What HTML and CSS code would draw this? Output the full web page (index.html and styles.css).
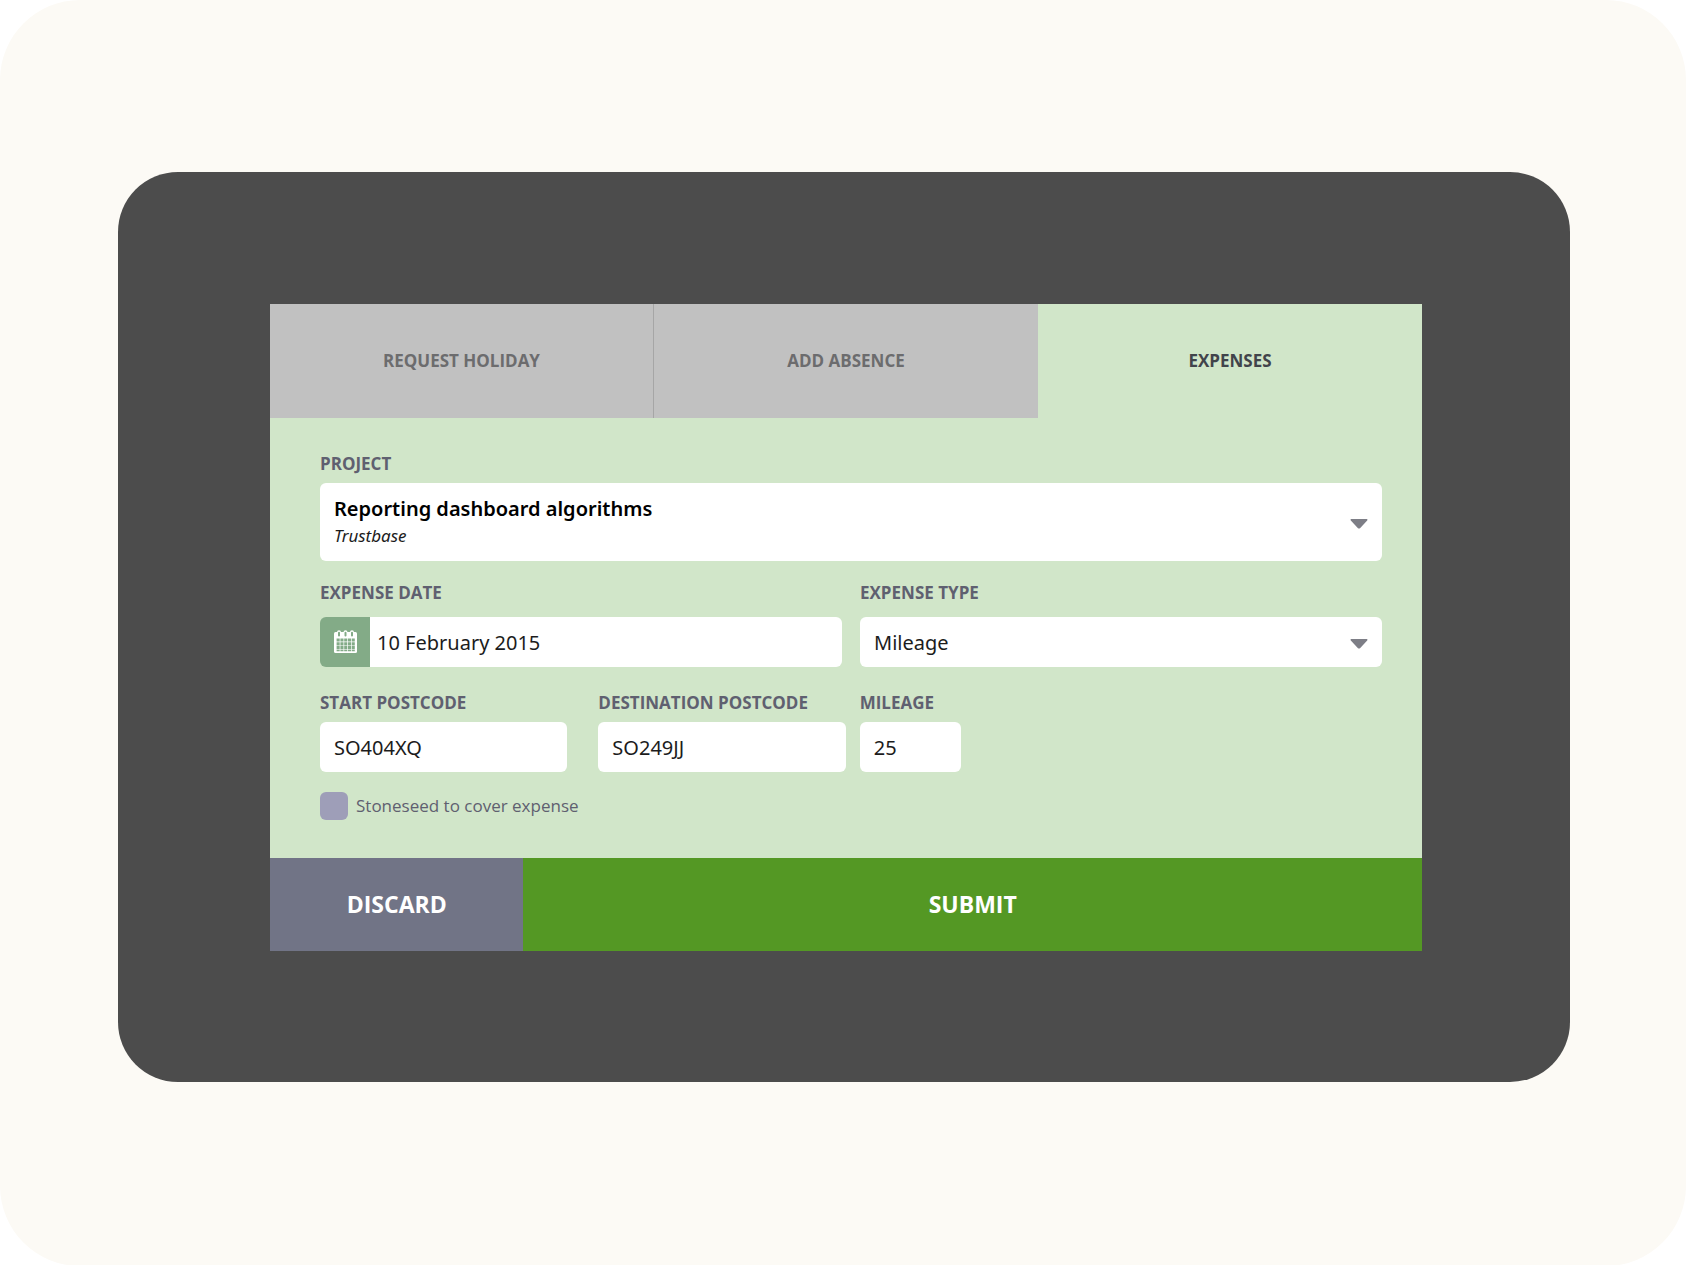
FILE: index.html
```
<!DOCTYPE html>
<html lang="en">
  <head>
    <meta charset="utf-8">
    <meta name="viewport" content="width=device-width, initial-scale=1">
    <title>Expenses</title>
    <link rel="stylesheet" href="styles.css">
  </head>
  <body>
    <div class="page">
      <main class="panel">
        <form class="widget">
          <nav class="tabs">
            <button type="button" class="tab">REQUEST HOLIDAY</button>
            <button type="button" class="tab">ADD ABSENCE</button>
            <button type="button" class="tab active">EXPENSES</button>
          </nav>

          <div class="fields">
            <div class="field">
              <label for="project">PROJECT</label>
              <div class="dropdown project">
                <select id="project">
                  <option>Reporting dashboard algorithms</option>
                </select>
                <span class="client">Trustbase</span>
                <svg class="arrow" viewBox="0 0 18 10"><path d="M1 0H17Q18 .6 17.2 1.4L10 9.2Q9 10 8 9.2L.8 1.4Q0 .6 1 0Z"/></svg>
              </div>
            </div>

            <div class="halves">
              <div class="field">
                <label for="date">EXPENSE DATE</label>
                <div class="date">
                  <button type="button" class="calendar" aria-label="Pick a date">
                    <svg viewBox="0 0 23 23">
                      <path fill="#fff" d="M1.5 2H21.5Q23 2 23 3.5V21.5Q23 23 21.5 23H1.5Q0 23 0 21.5V3.5Q0 2 1.5 2Z"/>
                      <path stroke="#fff" stroke-width="4" stroke-linecap="round" d="M5 2.2V5M11.5 2.2V5M18 2.2V5"/>
                      <path class="cut" stroke-width="2" stroke-linecap="round" d="M5 2.8V5.6M11.5 2.8V5.6M18 2.8V5.6"/>
                      <path class="cut" stroke-width="3.2" stroke-dasharray="3.1 .7" d="M2.6 10H20.8M2.6 13.8H20.8M2.6 17.6H20.8"/>
                      <path class="cut" stroke-width="1.4" stroke-dasharray="3.1 .7" d="M2.6 20.5H20.8"/>
                    </svg>
                  </button>
                  <input id="date" type="text" value="10 February 2015">
                </div>
              </div>
              <div class="field">
                <label for="type">EXPENSE TYPE</label>
                <div class="dropdown">
                  <select id="type">
                    <option>Mileage</option>
                  </select>
                  <svg class="arrow" viewBox="0 0 18 10"><path d="M1 0H17Q18 .6 17.2 1.4L10 9.2Q9 10 8 9.2L.8 1.4Q0 .6 1 0Z"/></svg>
                </div>
              </div>
            </div>

            <div class="journey">
              <div class="postcodes">
                <div class="field">
                  <label for="start">START POSTCODE</label>
                  <input id="start" type="text" value="SO404XQ">
                </div>
                <div class="field">
                  <label for="destination">DESTINATION POSTCODE</label>
                  <input id="destination" type="text" value="SO249JJ">
                </div>
              </div>
              <div class="field mileage">
                <label for="mileage">MILEAGE</label>
                <input id="mileage" type="text" value="25">
              </div>
            </div>

            <label class="check">
              <input type="checkbox">
              Stoneseed to cover expense
            </label>
          </div>

          <div class="actions">
            <button type="reset" class="discard">DISCARD</button>
            <button type="submit" class="submit">SUBMIT</button>
          </div>
        </form>
      </main>
    </div>
  </body>
</html>
```
FILE: styles.css
```
* {
  box-sizing: border-box;
}
body {
  --green-bg: #d1e6c9;
  --label-color: #5f6070;
  --label-font: "Open Sans", "Noto Sans", sans-serif;
  margin: 0;
  background: #fff;
  font-family: "Noto Sans", sans-serif;
}
button, input, select {
  margin: 0;
  border: 0;
  font-family: inherit;
}

.page {
  min-height: 100vh;
  padding: 172px 116px 184px 118px;
  background: #fcfaf5;
  border-radius: 80px;
}
.panel {
  padding: 132px 148px 131px 152px;
  background: #4c4c4c;
  border-radius: 60px;
}
.widget {
  background: var(--green-bg);
}

.tabs {
  display: grid;
  grid-template-columns: repeat(3, 1fr);
}
.tab {
  height: 114px;
  padding: 0 0 2px;
  background: #c1c1c1;
  color: #6c6c6e;
  font-family: var(--label-font);
  font-size: 17px;
  font-weight: 700;
}
.tab:first-child {
  border-right: 1px solid #a6a6a6;
}
.tab.active {
  background: var(--green-bg);
  color: #41444b;
}

.fields {
  display: flex;
  flex-direction: column;
  padding: 34px 40px 38px 50px;
}
.field {
  display: flex;
  flex-direction: column;
  gap: 7px;
}
.field label {
  color: var(--label-color);
  font-family: var(--label-font);
  font-size: 17px;
  font-weight: 700;
  line-height: 24px;
}
input[type="text"], select {
  width: 100%;
  height: 50px;
  padding: 0 14px;
  background: #fff;
  border-radius: 6px;
  color: #1c1c1c;
  font-size: 20px;
}
select {
  appearance: none;
}

.dropdown {
  position: relative;
}
.arrow {
  position: absolute;
  right: 14px;
  top: 50%;
  width: 18px;
  height: 10px;
  margin-top: -3px;
  fill: #7d7e86;
  pointer-events: none;
}
.project {
  height: 78px;
  padding-top: 11px;
  background: #fff;
  border-radius: 6px;
}
.project select {
  display: block;
  height: 28px;
  color: #000;
  font-weight: 600;
}
.client {
  display: block;
  padding: 0 14px;
  color: #1c1c1c;
  font-size: 17px;
  font-style: italic;
  line-height: 28px;
}

.halves {
  display: grid;
  grid-template-columns: 1fr 1fr;
  gap: 18px;
  margin-top: 20px;
}
.halves .field {
  gap: 12px;
}
.date {
  display: flex;
}
.calendar {
  display: flex;
  flex: none;
  align-items: center;
  justify-content: center;
  width: 50px;
  height: 50px;
  padding: 0 0 2px;
  background: #83ab87;
  border-radius: 6px 0 0 6px;
}
.calendar svg {
  width: 23px;
  height: 23px;
}
.calendar .cut {
  fill: none;
  stroke: #83ab87;
}
.date input[type="text"] {
  padding-left: 7px;
  border-radius: 0 6px 6px 0;
}

.journey {
  display: flex;
  gap: 14px;
  margin-top: 24px;
}
.postcodes {
  display: grid;
  grid-template-columns: 1fr 1fr;
  flex: 0 0 49.5%;
  gap: 31px;
}
.mileage {
  width: 101px;
}

.check {
  display: flex;
  align-items: center;
  gap: 8px;
  margin-top: 20px;
  color: var(--label-color);
  font-family: var(--label-font);
  font-size: 17px;
  line-height: 28px;
}
.check input {
  appearance: none;
  width: 28px;
  height: 28px;
  background: #9e9eb8;
  border-radius: 6px;
}
.check input:checked {
  background: #5f6070;
}

.actions {
  display: flex;
}
.actions button {
  height: 93px;
  padding: 0 0 2px;
  color: #fff;
  font-family: var(--label-font);
  font-size: 23px;
  font-weight: 700;
}
.actions .discard {
  width: 22%;
  background: #717486;
}
.actions .submit {
  flex: 1;
  background: #549824;
}
```
